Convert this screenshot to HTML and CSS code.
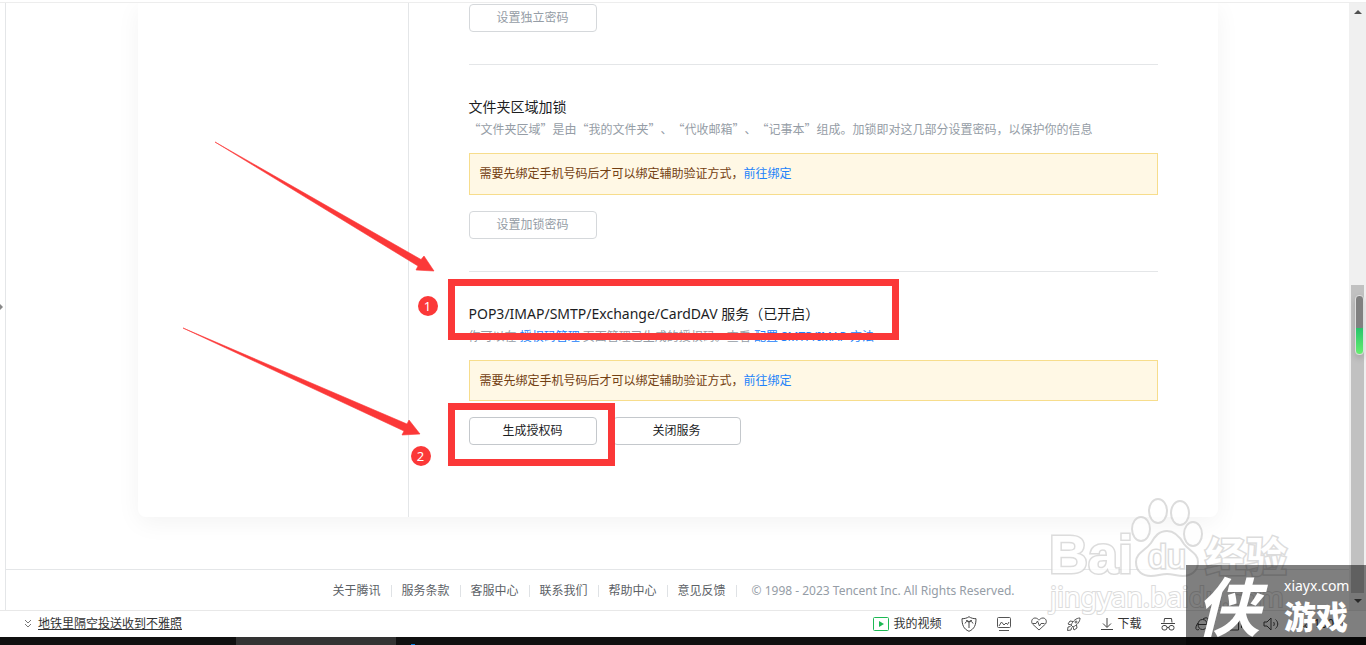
FILE: index.html
```html
<!DOCTYPE html>
<html lang="zh-CN">
<head>
<meta charset="utf-8">
<title>邮箱设置</title>
<link rel="stylesheet" href="styles.css">
</head>
<body>
<div class="shell">
  <div class="gutter"><i class="gutter-arrow"></i></div>
  <div class="page">
    <div class="card">
      <aside class="sidebar"></aside>
      <main class="content">
        <section class="section">
          <button class="btn" disabled>设置独立密码</button>
        </section>
        <section class="section">
          <h2 class="title">文件夹区域加锁</h2>
          <p class="desc">“文件夹区域”是由“我的文件夹”、“代收邮箱”、“记事本”组成。加锁即对这几部分设置密码，以保护你的信息</p>
          <div class="notice">需要先绑定手机号码后才可以绑定辅助验证方式，<a class="link" href="#">前往绑定</a></div>
          <button class="btn" disabled>设置加锁密码</button>
        </section>
        <section class="section">
          <h2 class="title">POP3/IMAP/SMTP/Exchange/CardDAV 服务（已开启）</h2>
          <p class="desc desc-mixed">你可以在 <a class="link" href="#">授权码管理</a> 页面管理已生成的授权码。查看 <a class="link" href="#">配置 SMTP/IMAP 方法</a></p>
          <div class="notice">需要先绑定手机号码后才可以绑定辅助验证方式，<a class="link" href="#">前往绑定</a></div>
          <div class="actions">
            <button class="btn">生成授权码</button>
            <button class="btn">关闭服务</button>
          </div>
        </section>
      </main>
      <svg class="marks" width="780" height="480" viewBox="0 0 780 480" fill="#fb3838" stroke="#fb3838">
        <path stroke-width=".6" d="M77 139L283 256.500 286 253 296 268 278 267 280 263z"/>
        <path stroke-width=".6" d="M45 325L269 421 271 417 282 431 264 432 266 428z"/>
        <path fill="none" stroke-width="7" d="M313.500 279.500h444v54h-444zM313.500 403.500h160v56h-160z"/>
      </svg>
      <span class="badge badge-one">1</span>
      <span class="badge badge-two">2</span>
    </div>
    <footer class="footer">
      <a href="#">关于腾讯</a><a href="#">服务条款</a><a href="#">客服中心</a><a href="#">联系我们</a><a href="#">帮助中心</a><a href="#">意见反馈</a>
      <span class="copyright">© 1998 - 2023 Tencent Inc. All Rights Reserved.</span>
    </footer>
  </div>
  <div class="scrollbar">
    <i class="arrow-up"></i>
    <div class="track"><div class="thumb"><i class="meter"></i></div></div>
    <i class="arrow-down"></i>
  </div>
</div>

<div class="statusbar">
  <svg class="chevrons" width="8" height="10" viewBox="0 0 8 10" fill="none" stroke="#777"><path d="M1 1l3 3 3-3M1 5l3 3 3-3"/></svg>
  <a class="news" href="#">地铁里隔空投送收到不雅照</a>
  <div class="tools">
    <button class="tool"><svg width="16" height="14" viewBox="0 0 16 14"><rect x=".5" y=".5" width="15" height="13" rx="1" fill="none" stroke="#1db954"/><path d="M6 4v6l5-3z" fill="#1db954"/></svg>我的视频</button>
    <button class="tool" aria-label="防护"><svg width="16" height="16" viewBox="0 0 16 16" fill="none" stroke="#444"><path d="M8 .7c2 1.500 4.500 2 7 2 0 6-1.500 10.300-7 12.600C2.500 13 1 8.700 1 2.700c2.500 0 5-.5 7-2z"/><path d="M8 12V6M4 7.500c.5-2 2.500-2.500 4-1.500 1.500-1 3.500-.5 4 1.500M5 4.800c1.500-.6 2.500 0 3 1.200.5-1.200 1.500-1.800 3-1.200"/></svg></button>
    <button class="tool" aria-label="图片"><svg width="14" height="14" viewBox="0 0 14 14" fill="none" stroke="#555"><rect x=".5" y=".5" width="13" height="10" rx="1"/><path d="M2 9l2.500-4L7 8l2-2 1.500 1.500L12 5M2 13.500h10"/></svg></button>
    <button class="tool" aria-label="健康"><svg width="16" height="14" viewBox="0 0 16 14" fill="none" stroke="#555"><path d="M8 13L1.500 7C-.5 4 1.500 1 4 1c2 0 3 1 4 2.200C9 2 10 1 12 1c2.500 0 4.500 3 2.500 6z"/><path d="M2 6.500h3l1.500-2.500 2 5 1.500-2.500h3.500"/></svg></button>
    <button class="tool" aria-label="加速"><svg width="14" height="14" viewBox="0 0 14 14" fill="none" stroke="#555"><path d="M13 1C9 1 6 4 4 8l2 2c4-2 7-5 7-9zM6 4.500L3 4 1 7l3 1M9.500 8l.5 3-3 2-1-3M3.500 9.500L1 10l-.5 3.500L4 13l.5-2.500"/><circle cx="9" cy="5" r="1"/></svg></button>
    <button class="tool"><svg width="12" height="14" viewBox="0 0 12 14" fill="none" stroke="#444"><path d="M6 1v9M2 6.500l4 4 4-4M0 12.500h12"/></svg>下载</button>
    <button class="tool" aria-label="无痕"><svg width="14" height="14" viewBox="0 0 14 14" fill="none" stroke="#444"><path d="M3 5.500l.5-4h7l.5 4M0 6.500h14M6 10.500h2"/><rect x="1" y="8.500" width="5" height="4.500" rx="2"/><rect x="8" y="8.500" width="5" height="4.500" rx="2"/></svg></button>
    <button class="tool" aria-label="浏览器"><svg width="14" height="14" viewBox="0 0 14 14" fill="none" stroke="#444"><path d="M3 7.500h9C12 4 10 2.500 7.500 2.500c-6 0-6 10 0 10 2 0 3.500-1 4.500-3M8 2c3-2 6-1.500 5 2M3 6c-3 4-3 8 1 6.500"/></svg></button>
    <button class="tool" aria-label="窗口"><svg width="14" height="14" viewBox="0 0 14 14" fill="none" stroke="#444"><path d="M1 4.500h8.500V13H1zM4 4V1.500h8.500V11"/></svg></button>
    <button class="tool" aria-label="声音"><svg width="16" height="14" viewBox="0 0 16 14" fill="none" stroke="#444"><path d="M1 5h3l4-4v12L4 9H1zM10.500 5c1 1 1 3 0 4M12.500 2.500c3 2.500 3 6.500 0 9"/></svg></button>
    <button class="tool"><svg width="10" height="12" viewBox="0 0 10 12" fill="none" stroke="#444"><circle cx="4" cy="5" r="3.500"/><path d="M6.500 8l3 3.500"/></svg>100%</button>
  </div>
</div>
<div class="taskbar"><i class="task-active"></i><i class="task-dot"></i></div>

<svg class="baidu" width="250" height="125" viewBox="0 0 250 125" fill="#fff" stroke="#d4d4d4" stroke-width="2">
  <ellipse cx="95" cy="35" rx="9" ry="12"/>
  <ellipse cx="112" cy="17" rx="9" ry="12"/>
  <ellipse cx="134" cy="19" rx="9" ry="12"/>
  <ellipse cx="147" cy="40" rx="9" ry="12"/>
  <path d="M121 37c8 0 13 6 17 13 5 7 14 9 14 18 0 10-8 14-15 14-6 0-10-2-16-2s-10 2-16 2c-8 0-15-4-15-14 0-9 9-11 15-19 4-7 8-12 16-12z"/>
  <text class="wm-bai" x="3" y="79">Bai</text>
  <text class="wm-du" x="102" y="74">du</text>
  <text class="wm-exp" x="159" y="78">经验</text>
  <text class="wm-url" x="4" y="113">jingyan.baidu.com</text>
</svg>
<div class="brand">
  <span class="brand-mark">侠</span>
  <div class="brand-text"><span class="brand-url">xiayx.com</span><strong class="brand-name">游戏</strong></div>
</div>
</body>
</html>
```
FILE: styles.css
```css
* { box-sizing: border-box; }

body {
  position: relative;
  display: flex;
  flex-direction: column;
  min-height: 100vh;
  margin: 0;
  overflow: hidden;
  background: #fff;
  color: #1c1d1f;
  font: 12px/20px "Noto Sans", "Noto Sans CJK SC", sans-serif;
}

button { font: inherit; color: inherit; }
a { color: inherit; text-decoration: none; }
h2, p { margin: 0; }

.shell {
  display: flex;
  flex: 1;
  margin-top: 2px;
  border-top: 1px solid #ededed;
  overflow: hidden;
}

.gutter {
  display: flex;
  align-items: center;
  width: 6px;
  border-right: 1px solid #e4e6e8;
}
.gutter-arrow {
  border: 3px solid transparent;
  border-left-color: #888;
  border-right: 0;
}

.page {
  display: flex;
  flex: 1;
  flex-direction: column;
  min-width: 0;
  overflow: hidden;
}

.card {
  position: relative;
  display: flex;
  flex: 1;
  width: 100%;
  max-width: 1080px;
  margin: 0 auto 52px;
  border-radius: 0 0 8px 8px;
  box-shadow: 0 6px 24px rgba(0, 0, 0, 0.05);
}
.sidebar { width: 271px; border-right: 1px solid #e4e6e8; }
.content { flex: 1; padding: 1px 60px 60px; }

.section + .section {
  margin-top: 32px;
  padding-top: 32px;
  border-top: 1px solid #e4e6e8;
}
.title { font-size: 14px; font-weight: 400; line-height: 20px; }
.desc {
  margin-top: 2px;
  color: #959da6;
  font-family: "Noto Sans CJK SC", sans-serif;
  text-spacing-trim: space-all;
  white-space: nowrap;
}
.desc-mixed { font-family: "Noto Sans", "Noto Sans CJK SC", sans-serif; line-height: 22px; }
.notice {
  margin: 14px 0 16px;
  padding: 10px;
  border: 1px solid #f7dd8c;
  background: #fff8e5;
  color: #734012;
}
.desc-mixed + .notice { margin-top: 12px; padding-bottom: 9px; }
.link { color: #2282fa; }

.btn {
  display: block;
  width: 128px;
  height: 28px;
  padding: 0;
  border: 1px solid #c4c8cc;
  border-radius: 4px;
  background: #fff;
}
.btn:disabled { border-color: #d5d8db; color: #959da6; }
.actions { display: flex; gap: 16px; }

.marks { position: absolute; top: 0; left: 0; }
.badge {
  position: absolute;
  width: 20px;
  height: 20px;
  border-radius: 50%;
  background: #fb3838;
  color: #fff;
  font-size: 13px;
  text-align: center;
}
.badge-one { top: 293px; left: 280px; }
.badge-two { top: 443px; left: 273px; }

.footer {
  display: flex;
  justify-content: center;
  align-items: center;
  height: 41px;
  padding: 2px 8px 0 0;
  border-top: 1px solid #e4e6e8;
  color: #5c6166;
}
.footer a {
  display: flex;
  align-items: center;
}
.footer a + a { padding-left: 10px; }
.footer a::after {
  width: 1px;
  height: 12px;
  margin-left: 10px;
  background: #dfe2e5;
  content: "";
}
.copyright { padding-left: 15px; color: #959da6; }

.scrollbar {
  display: flex;
  flex-direction: column;
  align-items: center;
  width: 17px;
  padding: 7px 0;
  background: #f0f0f0;
}
.arrow-up { border: 4px solid transparent; border-top: 0; border-bottom-color: #505050; }
.arrow-down { border: 4px solid transparent; border-bottom: 0; border-top-color: #505050; }
.track {
  display: flex;
  flex: 1;
  align-items: flex-end;
  padding-bottom: 6px;
}
.thumb {
  width: 13px;
  height: 308px;
  padding: 10px 0 0 4px;
  background: #c1c1c1;
}
.meter {
  display: block;
  width: 9px;
  height: 60px;
  border: 1px solid #ddd;
  border-radius: 4px;
  background: linear-gradient(#808080 55%, #27c46b 55%, #66ee70);
  box-shadow: 0 3px 6px rgba(0, 0, 0, 0.15);
}

.statusbar {
  display: flex;
  align-items: center;
  height: 27px;
  padding: 0 22px 0 24px;
  border-top: 1px solid #e8e8e8;
  background: #fff;
  color: #333;
}
.chevrons { margin-right: 6px; }
.news { text-decoration: underline; }
.tools { display: flex; align-items: center; gap: 20px; margin-left: auto; }
.tool {
  display: flex;
  align-items: center;
  gap: 4px;
  padding: 0;
  border: 0;
  background: none;
}

.taskbar {
  display: flex;
  height: 8px;
  padding-left: 236px;
  background: #101010;
}
.task-active { width: 160px; background: #333; }
.task-dot { width: 4px; height: 1px; margin: 7px 0 0 15px; background: #0078d4; }

.baidu {
  position: absolute;
  right: 70px;
  bottom: 26px;
  opacity: 0.8;
}
.baidu text { font-family: "Liberation Sans", sans-serif; font-weight: 700; paint-order: stroke; stroke-width: 3px; }
.baidu .wm-bai { font-size: 54px; }
.baidu .wm-du { font-size: 34px; font-weight: 400; }
.baidu .wm-exp { font-family: "Noto Sans CJK SC", sans-serif; font-size: 41px; }
.baidu .wm-url { font-family: "Noto Sans", sans-serif; font-size: 27px; font-weight: 400; stroke-width: 2px; }

.brand {
  position: absolute;
  right: 0;
  bottom: 0;
  display: flex;
  gap: 16px;
  width: 180px;
  height: 80px;
  padding: 8px 0 0 10px;
  background: rgba(0, 0, 0, 0.5);
  color: #fff;
}
.brand-mark {
  width: 72px;
  font: italic 700 64px/60px "Noto Sans CJK SC", sans-serif;
}
.brand-text { display: flex; flex-direction: column; }
.brand-url { font-size: 14px; line-height: 26px; }
.brand-name {
  font: 900 32px/32px "Noto Sans CJK SC", sans-serif;
}
```
